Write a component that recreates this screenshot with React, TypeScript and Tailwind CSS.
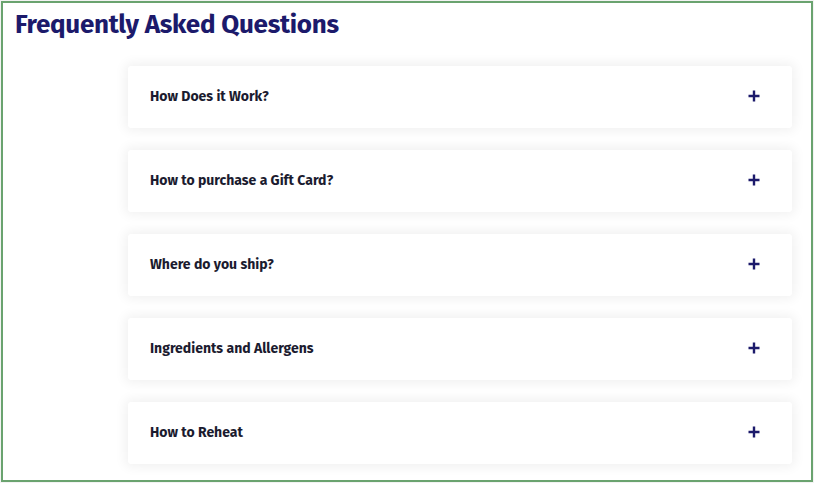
const questions = [
  "How Does it Work?",
  "How to purchase a Gift Card?",
  "Where do you ship?",
  "Ingredients and Allergens",
  "How to Reheat",
];

function Plus() {
  return (
    <svg width="12" height="12" viewBox="0 0 12 12" className="text-[#1c1a6b]">
      <path d="M6 0.5v11M0.5 6h11" stroke="currentColor" strokeWidth="2.4" fill="none" />
    </svg>
  );
}

export default function App() {
  return (
    <div className="w-[814px] h-[483px] bg-[#f3f3f3] p-px" style={{ fontFamily: "'Fira Sans', Lato, 'Open Sans', sans-serif" }}>
      <div className="h-[481px] w-[812px] border-2 border-[#6aa36f] bg-white">
        <h1 className="pl-[12px] pt-[5px] text-[26px] font-bold leading-[34px] text-[#1c1a6b] tracking-[-0.25px]">
          Frequently Asked Questions
        </h1>
        <div className="mt-[24px] ml-[125px] flex w-[664px] flex-col gap-[22px]">
          {questions.map((q) => (
            <div
              key={q}
              className="flex h-[62px] items-center justify-between rounded-[3px] bg-white pb-[2px] pl-[22px] pr-[32px] shadow-[0_0_12px_3px_rgba(0,0,0,0.06)]"
            >
              <span className="text-[14px] font-bold text-[#1b1b2f]">{q}</span>
              <Plus />
            </div>
          ))}
        </div>
      </div>
    </div>
  );
}
